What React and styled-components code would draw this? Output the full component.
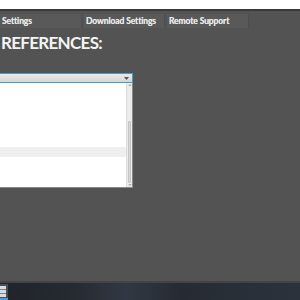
import React from "react";
import styled, { createGlobalStyle } from "styled-components";

const Global = createGlobalStyle`
  html, body { margin: 0; padding: 0; }
  body { width: 300px; height: 300px; overflow: hidden; background: #fff; }
`;

const Page = styled.div`
  width: 300px;
  height: 300px;
  display: flex;
  flex-direction: column;
  font-family: Lato, "Open Sans", sans-serif;
`;

const TopStrip = styled.div`
  height: 9px;
  background: #ffffff;
`;

const Rule = styled.div`
  height: 2px;
  background: #3a3a3a;
`;

const Main = styled.div`
  flex: 1;
  background: #535353;
  padding-top: 3px;
  display: flex;
  flex-direction: column;
`;

const TabRow = styled.div`
  display: flex;
  gap: 2px;
  height: 14px;
`;

const Tab = styled.div`
  width: ${(p) => p.$w}px;
  height: 14px;
  box-sizing: border-box;
  background: #595959;
  border-right: 1px solid #4e4e4e;
  color: #e6e6e6;
  font-weight: 700;
  font-size: 8.5px;
  line-height: 14px;
  padding-left: 2px;
  white-space: nowrap;
  letter-spacing: -0.1px;
  text-shadow: 0 0 0.4px #e6e6e6;
`;

const Heading = styled.div`
  margin-top: 6px;
  padding-left: 1px;
  color: #f4f4f4;
  font-weight: 700;
  font-size: 17px;
  letter-spacing: -0.7px;
  line-height: 18px;
  height: 18px;
`;

const Panel = styled.div`
  margin-top: 21px;
  width: 133px;
  display: flex;
  flex-direction: column;
`;

const Combo = styled.div`
  height: 10px;
  box-sizing: border-box;
  border: 1px solid #3fa0c6;
  border-left: none;
  background: linear-gradient(#e9e9e9, #d6d6d6);
  display: flex;
  justify-content: flex-end;
  align-items: center;
  padding-right: 3px;
`;

const List = styled.div`
  height: 105px;
  box-sizing: border-box;
  background: #ffffff;
  border-right: 1px solid #8a8a8a;
  border-bottom: 1px solid #8a8a8a;
  display: flex;
`;

const Rows = styled.div`
  flex: 1;
  display: flex;
  flex-direction: column;
  padding-top: 64px;
`;

const Row = styled.div`
  height: 10px;
  background: ${(p) => (p.$sel ? "#efefef" : "transparent")};
`;

const Scroll = styled.div`
  width: 6px;
  background: #ececec;
  border-left: 1px solid #dcdcdc;
  display: flex;
  flex-direction: column;
  align-items: center;
  padding: 1px 0;
  box-sizing: border-box;
`;

const ScrollArrow = styled.div`
  width: 0;
  height: 0;
  border-left: 2px solid transparent;
  border-right: 2px solid transparent;
  ${(p) => (p.$up ? "border-bottom: 2px solid #b0b0b0;" : "border-top: 2px solid #b0b0b0;")}
`;

const Track = styled.div`
  flex: 1;
  width: 100%;
  display: flex;
  flex-direction: column;
  padding: 35px 1px 1px;
  box-sizing: border-box;
`;

const Thumb = styled.div`
  flex: 1;
  background: #d9d9d9;
  border: 1px solid #c4c4c4;
  border-radius: 1px;
`;

const Spacer = styled.div`
  flex: 1;
`;

const Taskbar = styled.div`
  height: 17px;
  border-top: 2px solid #444;
  background: linear-gradient(90deg, #20242a 0%, #262a31 25%, #323843 42%, #262b33 60%, #2a3039 85%, #2c323b 100%);
  display: flex;
  align-items: flex-end;
`;

const StartIcon = styled.div`
  width: 8px;
  height: 16px;
  display: flex;
`;

export default function App() {
  return (
    <Page>
      <Global />
      <TopStrip />
      <Rule />
      <Main>
        <TabRow>
          <Tab $w={82}>Settings</Tab>
          <Tab $w={81}>Download Settings</Tab>
          <Tab $w={82}>Remote Support</Tab>
        </TabRow>
        <Heading>REFERENCES:</Heading>
        <Panel>
          <Combo>
            <svg width="5" height="3" viewBox="0 0 5 3">
              <path d="M0 0 H5 L2.5 3 Z" fill="#555" />
            </svg>
          </Combo>
          <List>
            <Rows>
              <Row $sel />
            </Rows>
            <Scroll>
              <ScrollArrow $up />
              <Track>
                <Thumb />
              </Track>
              <ScrollArrow />
            </Scroll>
          </List>
        </Panel>
        <Spacer />
      </Main>
      <Taskbar>
        <StartIcon>
          <svg width="8" height="16" viewBox="0 0 8 16">
            <rect x="0" y="0" width="8" height="16" fill="#4a4f57" />
            <rect x="0" y="2" width="6" height="11" fill="#d8dde3" />
            <rect x="0" y="5" width="6" height="1" fill="#7a8290" />
            <rect x="0" y="9" width="6" height="1" fill="#7a8290" />
            <rect x="0" y="14" width="8" height="2" fill="#4a9fe0" />
          </svg>
        </StartIcon>
      </Taskbar>
    </Page>
  );
}
